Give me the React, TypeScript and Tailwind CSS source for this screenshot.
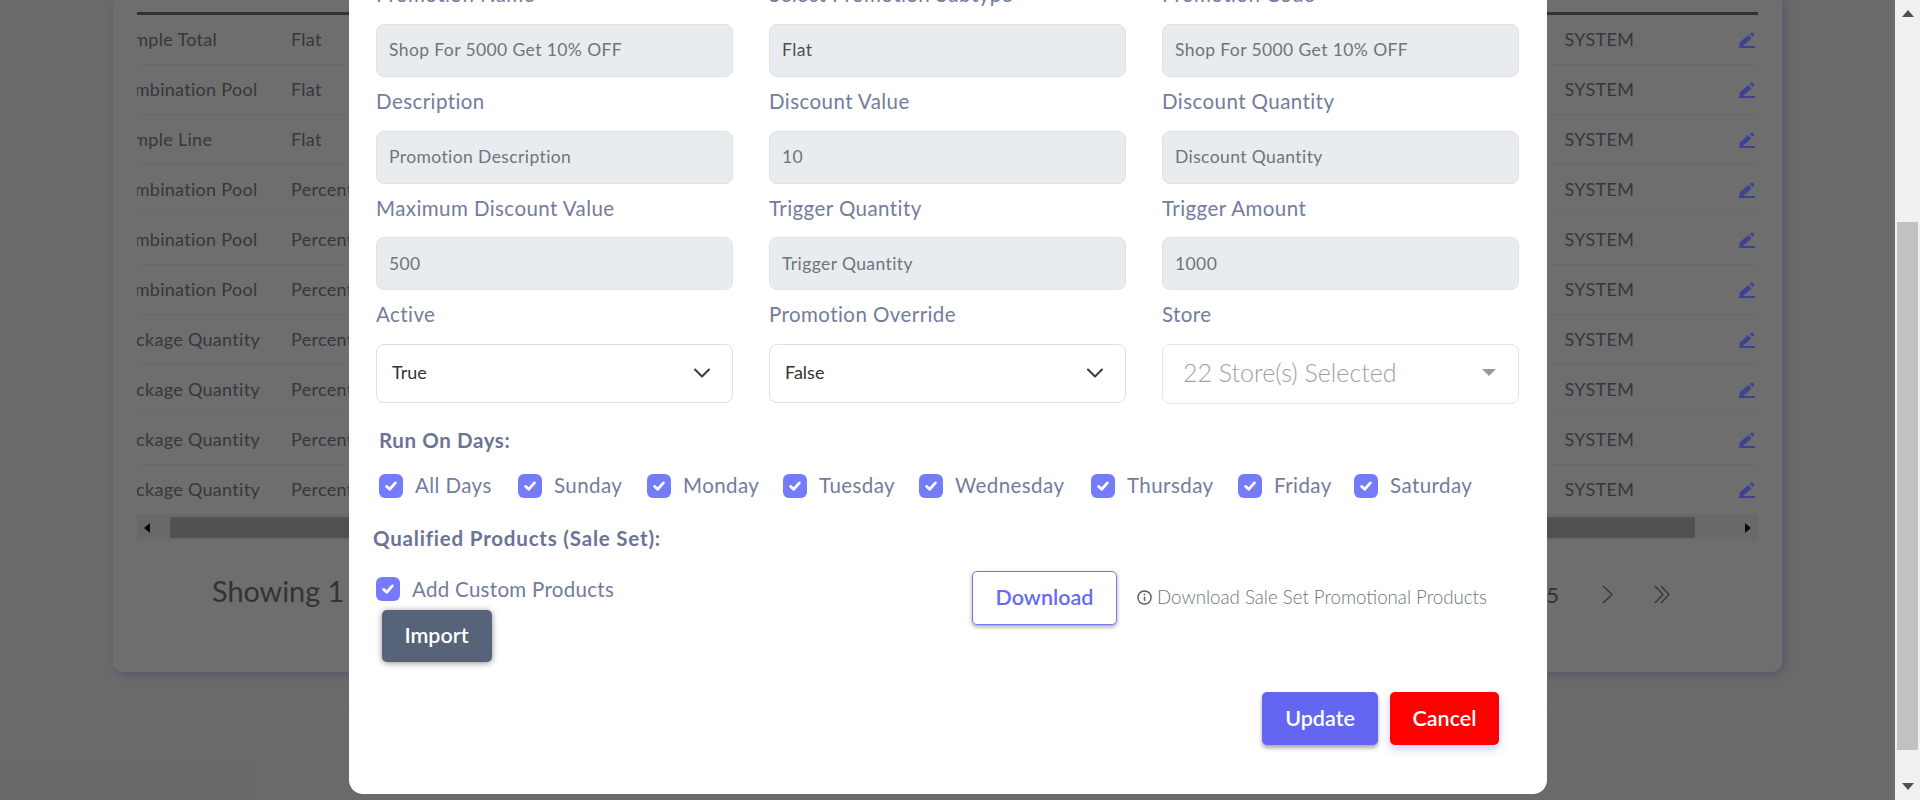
import React from "react";

const font = { fontFamily: "Lato, 'Open Sans', sans-serif" };

const rows = [
  ["Sample Total", "Flat", "-ml-[23px]"],
  ["Combination Pool", "Flat", "-ml-[25px]"],
  ["Sample Line", "Flat", "-ml-[23px]"],
  ["Combination Pool", "Percentage", "-ml-[25px]"],
  ["Combination Pool", "Percentage", "-ml-[25px]"],
  ["Combination Pool", "Percentage", "-ml-[25px]"],
  ["Package Quantity", "Percentage", "-ml-[21px]"],
  ["Package Quantity", "Percentage", "-ml-[21px]"],
  ["Package Quantity", "Percentage", "-ml-[21px]"],
  ["Package Quantity", "Percentage", "-ml-[21px]"],
];

const fields: { label: string; value: string; tone: string }[] = [
  { label: "Promotion Name", value: "Shop For 5000 Get 10% OFF", tone: "text-[#6c757d]" },
  { label: "Select Promotion Subtype", value: "Flat", tone: "text-[#495057]" },
  { label: "Promotion Code", value: "Shop For 5000 Get 10% OFF", tone: "text-[#6c757d]" },
  { label: "Description", value: "Promotion Description", tone: "text-[#6c757d]" },
  { label: "Discount Value", value: "10", tone: "text-[#6c757d]" },
  { label: "Discount Quantity", value: "Discount Quantity", tone: "text-[#6c757d]" },
  { label: "Maximum Discount Value", value: "500", tone: "text-[#6c757d]" },
  { label: "Trigger Quantity", value: "Trigger Quantity", tone: "text-[#6c757d]" },
  { label: "Trigger Amount", value: "1000", tone: "text-[#6c757d]" },
];

const days = [
  ["All Days", "w-[139px]"],
  ["Sunday", "w-[129px]"],
  ["Monday", "w-[136px]"],
  ["Tuesday", "w-[136px]"],
  ["Wednesday", "w-[172px]"],
  ["Thursday", "w-[147px]"],
  ["Friday", "w-[116px]"],
  ["Saturday", "w-[120px]"],
];

function Check() {
  return (
    <span className="flex h-6 w-6 shrink-0 items-center justify-center rounded-[6px] bg-[#747cfb]">
      <svg width="14" height="14" viewBox="0 0 14 14" fill="none">
        <path d="M2.6 7.4 5.7 10.2 11.4 3.9" stroke="#fff" strokeWidth="2.8" strokeLinecap="round" strokeLinejoin="round" />
      </svg>
    </span>
  );
}

function Label({ children }: { children: React.ReactNode }) {
  return <div className="flex h-[53.67px] items-center pb-[5px] text-[20.5px] font-normal tracking-[0.43px] text-[#737c9d]">{children}</div>;
}

function Chevron() {
  return (
    <svg width="16" height="12" viewBox="0 0 16 12" fill="none" className="shrink-0">
      <path d="M1 2.5 8 9.5 15 2.5" stroke="#343a40" strokeWidth="2" strokeLinecap="round" strokeLinejoin="round" />
    </svg>
  );
}

function SelectBox({ value }: { value: string }) {
  return (
    <div className="flex h-[59px] items-center justify-between rounded-[8px] border border-[#dcdfe6] bg-white pb-[1px] pl-[15px] pr-[22px] text-[18px] text-[#333]">
      {value}
      <Chevron />
    </div>
  );
}

function Pencil() {
  return (
    <svg width="16" height="16" viewBox="0 0 16 16" className="relative z-10 shrink-0">
      <path d="M0.6 14 0.6 10.4 9.4 3 12.4 6.4 4 14Z" fill="#3e4295" />
      <path d="M10.6 2 13 0.2 15.6 2.6 13.6 5Z" fill="#3e4295" />
      <rect x="0" y="14" width="16" height="2" fill="#3e4295" />
    </svg>
  );
}

export default function App() {
  return (
    <div className="flex h-[800px] w-[1920px] overflow-hidden" style={font}>
      <main className="relative flex-1 overflow-hidden bg-[#f5f5f6]">
        <section className="ml-[113px] h-[672px] w-[1669px] rounded-b-[10px] bg-white px-[24px] pt-[12px] shadow-[3px_3px_8px_rgba(120,125,250,0.35)]">
          <div className="border-t-[3px] border-[#6f7585]">
            {rows.map((r, i) => (
              <div key={i} className="flex h-[50px] items-center border-b border-[#f1f1f4] text-[18px] tracking-[0.3px] text-[#7d818e]">
                <div className="w-[154px] overflow-hidden whitespace-nowrap">
                  <div className={r[2]}>{r[0]}</div>
                </div>
                <div className="flex-1">{r[1]}</div>
                <div className="w-[174.5px]">SYSTEM</div>
                <div className="w-[19px]">
                  <Pencil />
                </div>
              </div>
            ))}
          </div>
          <div className="flex h-[25px] items-center bg-[#f3f3f3] px-[7px]">
            <span className="h-0 w-0 border-y-[5px] border-r-[6px] border-y-transparent border-r-[#111]" />
            <span className="ml-[20px] mr-[50px] h-[21px] flex-1 bg-[#bcbcbc]" />
            <span className="h-0 w-0 border-y-[5px] border-l-[6px] border-y-transparent border-l-[#111]" />
          </div>
          <div className="flex h-[104px] items-center justify-between pl-[75px] pr-[88px] text-[#747680]">
            <span className="text-[28.8px]">Showing 1 to 10 of 50 entries</span>
            <div className="mt-[5px] flex items-center text-[22px]">
              <span>5</span>
              <svg width="11" height="19" viewBox="0 0 11 19" fill="none" className="ml-[43px]">
                <path d="M1 1 10 9.5 1 18" stroke="#747680" strokeWidth="1.3" />
              </svg>
              <svg width="16" height="19" viewBox="0 0 16 19" fill="none" className="ml-[41px]">
                <path d="M1 1 9 9.5 1 18M7 1 15 9.5 7 18" stroke="#747680" strokeWidth="1.3" />
              </svg>
            </div>
          </div>
        </section>
        <footer className="mt-[36px] h-[92px] border-t border-white" />

        <div className="absolute inset-0 bg-black/[.57]" />

        <div className="absolute left-[349px] top-[-29.67px] z-20 h-[823.67px] w-[1198px] rounded-[14px] bg-white px-[27px]">
          <div className="grid w-[1143px] grid-cols-[357px_357px_357px] gap-x-[36px]">
            {fields.map((f) => (
              <div key={f.label} className="h-[106.67px]">
                <Label>{f.label}</Label>
                <div className={`flex h-[53px] items-center rounded-[8px] border border-[#dee2e6] bg-[#e9ecef] px-[12px] text-[17.5px] tracking-[0.4px] ${f.tone}`}>
                  {f.value}
                </div>
              </div>
            ))}
            <div>
              <Label>Active</Label>
              <SelectBox value="True" />
            </div>
            <div>
              <Label>Promotion Override</Label>
              <SelectBox value="False" />
            </div>
            <div>
              <Label>Store</Label>
              <div className="flex h-[60px] items-center justify-between rounded-[8px] border border-[#e4e4e8] bg-white pb-[2px] pl-[20px] pr-[22px] text-[25px] font-light text-[#9f9f9f]">
                22 Store(s) Selected
                <span className="h-0 w-0 border-x-[7px] border-t-[7px] border-x-transparent border-t-[#999]" />
              </div>
            </div>
          </div>

          <div className="ml-[3px] mt-[21.5px] text-[20.5px] font-bold tracking-[0.6px] text-[#6b7396]">Run On Days:</div>
          <div className="ml-[3px] mt-[17.5px] flex h-6">
            {days.map((d) => (
              <label key={d[0]} className={`flex shrink-0 items-center gap-[12px] text-[20.5px] font-normal tracking-[0.43px] text-[#737c9d] ${d[1]}`}>
                <Check />
                {d[0]}
              </label>
            ))}
          </div>
          <div className="ml-[-3px] mt-[25.5px] text-[20.5px] font-bold tracking-[0.8px] text-[#6b7396]">Qualified Products (Sale Set):</div>

          <div className="mt-[23.5px] flex">
            <div className="w-[596px]">
              <label className="flex h-6 items-center gap-[12px] text-[20.5px] font-normal tracking-[0.3px] text-[#737c9d]">
                <Check />
                Add Custom Products
              </label>
              <button className="ml-[5.5px] mt-[9px] flex h-[52px] w-[110px] items-center justify-center rounded-[5px] bg-[#566379] pb-[2px] text-[21.5px] font-semibold text-white shadow-[0_1px_6px_rgba(0,0,0,0.45)]">
                Import
              </button>
            </div>
            <div className="-mt-[6px] flex h-[54px] items-center">
              <button className="flex h-[54px] w-[145px] items-center justify-center rounded-[5px] border border-[#7279f9] bg-white pb-[2px] text-[21.5px] font-semibold text-[#656bf5] shadow-[0_2px_4px_rgba(0,0,0,0.35)]">
                Download
              </button>
              <span className="ml-[20px] flex items-center gap-[5px] pb-[2px] text-[18.7px] font-light text-[#6c757d]">
                <svg width="15" height="15" viewBox="0 0 16 16" fill="none">
                  <circle cx="8" cy="8" r="7" stroke="#555b62" strokeWidth="1.5" />
                  <path d="M8 7v4.6" stroke="#555b62" strokeWidth="1.6" />
                  <circle cx="8" cy="4.6" r="1" fill="#555b62" />
                </svg>
                Download Sale Set Promotional Products
              </span>
            </div>
          </div>

          <div className="ml-[886px] mt-[30px] flex gap-[12px]">
            <button className="h-[53px] w-[116px] rounded-[5px] bg-[#6366f1] pb-[2px] text-[21.5px] font-semibold text-white shadow-[0_3px_4px_rgba(0,0,0,0.35)]">
              Update
            </button>
            <button className="h-[53px] w-[109px] rounded-[5px] bg-[#ff0000] pb-[2px] text-[21.5px] font-semibold text-white shadow-[0_4px_10px_rgba(99,102,241,0.35)]">
              Cancel
            </button>
          </div>
        </div>
      </main>

      <aside className="flex h-[800px] w-[25px] shrink-0 flex-col items-center bg-[#f1f1f1]">
        <div className="mt-[10px] h-0 w-0 border-x-[6px] border-b-[7px] border-x-transparent border-b-[#505050]" />
        <div className="mt-[205px] h-[528px] w-[21px] bg-[#c1c1c1]" />
        <div className="mt-[33px] h-0 w-0 border-x-[6px] border-t-[7px] border-x-transparent border-t-[#505050]" />
      </aside>
    </div>
  );
}
